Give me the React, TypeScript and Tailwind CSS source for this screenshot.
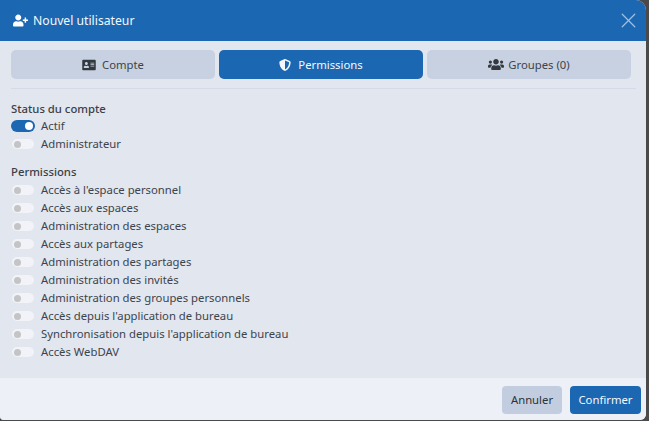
import { FaUserPlus, FaAddressCard, FaUsers } from "react-icons/fa";
import { FaShieldHalved } from "react-icons/fa6";
import { X } from "lucide-react";

function Toggle({ on = false }: { on?: boolean }) {
  return on ? (
    <span className="w-6 h-[12px] rounded-full bg-[#1b67b2] flex items-center justify-end pr-[2px] shrink-0">
      <span className="w-2 h-2 rounded-full bg-white" />
    </span>
  ) : (
    <span className="w-[22px] h-[10px] ml-px mr-px rounded-full bg-[#f1f3f8] flex items-center pl-[2px] shrink-0">
      <span className="w-[7px] h-[7px] rounded-full bg-[#c4c4c6]" />
    </span>
  );
}

function Row({ label, on }: { label: string; on?: boolean }) {
  return (
    <div className="h-[18px] flex items-center gap-[6px]">
      <Toggle on={on} />
      <span className="text-[11.3px] text-[#3d444c]">{label}</span>
    </div>
  );
}

const perms = [
  "Accès à l'espace personnel",
  "Accès aux espaces",
  "Administration des espaces",
  "Accès aux partages",
  "Administration des partages",
  "Administration des invités",
  "Administration des groupes personnels",
  "Accès depuis l'application de bureau",
  "Synchronisation depuis l'application de bureau",
  "Accès WebDAV",
];

export default function App() {
  return (
    <div className="w-[649px] h-[421px] bg-[#4a4a4a] overflow-hidden font-['Noto_Sans','Open_Sans',sans-serif]">
      <div className="w-[646px] h-[420px] rounded-tr-[10px] rounded-bl-[4px] rounded-br-[6px] overflow-hidden flex flex-col bg-[#e1e6ef]">
        <header className="h-[41px] bg-[#1b67b2] flex items-center justify-between pl-[13px] pr-[5px] text-white shrink-0">
          <div className="flex items-center gap-[5px]">
            <FaUserPlus className="w-[15px] h-[13px]" />
            <span className="text-[12.2px] pt-px text-[#f4f8fc]">Nouvel utilisateur</span>
          </div>
          <X className="w-[25px] h-[25px] text-[#9fc0e0]" strokeWidth={1.2} />
        </header>
        <main className="flex-1 pt-[9px] px-[11px]">
          <div className="flex gap-1 pb-[9px] mr-[-1px] border-b border-[#d5dbe6]">
            <button className="w-[204px] h-[29px] rounded-[5px] bg-[#c7d1e1] flex items-center justify-center gap-[6px] text-[11.3px] text-[#3d444c]">
              <FaAddressCard className="w-[14px] h-[12px] text-[#33383f]" />
              <span className="pt-px">Compte</span>
            </button>
            <button className="w-[204px] h-[29px] rounded-[5px] bg-[#1b67b2] flex items-center justify-center gap-[7px] text-[11.3px] text-[#f4f8fc]">
              <FaShieldHalved className="w-[12px] h-[12px]" />
              <span className="pt-px">Permissions</span>
            </button>
            <button className="w-[204px] h-[29px] rounded-[5px] bg-[#c7d1e1] flex items-center justify-center gap-[4px] text-[11.3px] text-[#3d444c]">
              <FaUsers className="w-[16px] h-[13px] text-[#33383f]" />
              <span className="pt-px">Groupes (0)</span>
            </button>
          </div>
          <h3 className="mt-[11px] h-[17px] leading-[18px] text-[11.3px] font-medium text-[#3a4047]">Status du compte</h3>
          <Row label="Actif" on />
          <Row label="Administrateur" />
          <h3 className="mt-[10px] h-[18px] leading-[18px] text-[11.3px] font-medium text-[#3a4047]">Permissions</h3>
          {perms.map((p) => (
            <Row key={p} label={p} />
          ))}
        </main>
        <footer className="h-[42px] bg-[#edf0f6] flex items-start justify-end gap-2 pt-[8px] pr-[5px] shrink-0">
          <button className="w-[60px] h-[28px] pt-px rounded-[4px] bg-[#c2cee0] text-[11.3px] text-[#2d3339]">Annuler</button>
          <button className="w-[71px] h-[28px] pt-px rounded-[4px] bg-[#1b67b2] text-[11.3px] text-[#f4f8fc]">Confirmer</button>
        </footer>
      </div>
    </div>
  );
}
